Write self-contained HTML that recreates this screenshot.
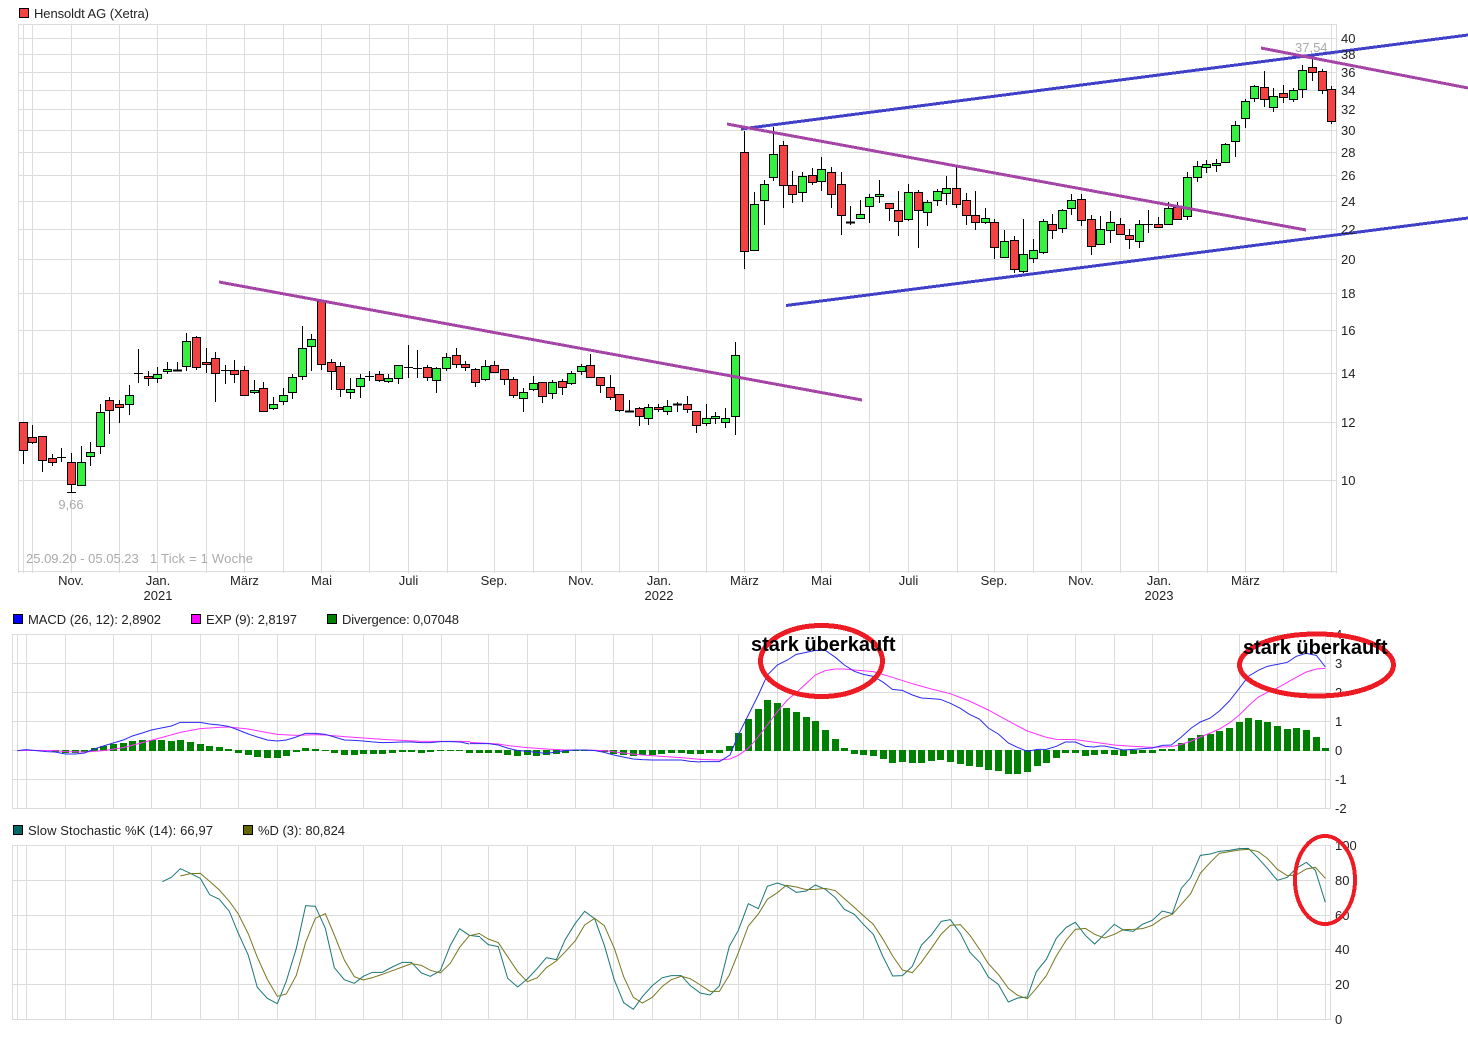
<!DOCTYPE html>
<html><head><meta charset="utf-8"><title>Hensoldt AG (Xetra)</title>
<style>
html,body{margin:0;padding:0;background:#fff;width:1468px;height:1044px;overflow:hidden}
svg{display:block;font-family:"Liberation Sans",sans-serif;font-size:13px}
.t{fill:#222}
.g{fill:#aaa}
.c{shape-rendering:crispEdges}
polyline{fill:none}
</style></head><body>
<svg width="1468" height="1044" viewBox="0 0 1468 1044" xmlns="http://www.w3.org/2000/svg">
<!-- main grid -->
<path class="c" fill="none" stroke="#dcdcdc" d="M18.5 24V573M23.5 24V573M32.5 24V573M71.5 24V573M119.5 24V573M157.5 24V573M206.5 24V573M244.5 24V573M283.5 24V573M321.5 24V573M369.5 24V573M408.5 24V573M447.5 24V573M494.5 24V573M533.5 24V573M581.5 24V573M619.5 24V573M658.5 24V573M706.5 24V573M744.5 24V573M783.5 24V573M821.5 24V573M869.5 24V573M908.5 24V573M957.5 24V573M994.5 24V573M1033.5 24V573M1081.5 24V573M1120.5 24V573M1158.5 24V573M1207.5 24V573M1245.5 24V573M1283.5 24V573M1331.5 24V573M1336.5 24V573M18 24.5H1337M18 38.5H1337M18 54.5H1337M18 72.5H1337M18 90.5H1337M18 109.5H1337M18 130.5H1337M18 152.5H1337M18 175.5H1337M18 201.5H1337M18 229.5H1337M18 259.5H1337M18 293.5H1337M18 330.5H1337M18 373.5H1337M18 422.5H1337M18 480.5H1337M18 571.5H1337"/>
<!-- macd grid -->
<path class="c" fill="none" stroke="#dcdcdc" d="M12.5 634V809M17.5 634V809M26.5 634V809M65.5 634V809M113.5 634V809M151.5 634V809M200.5 634V809M238.5 634V809M277.5 634V809M315.5 634V809M363.5 634V809M402.5 634V809M441.5 634V809M488.5 634V809M527.5 634V809M575.5 634V809M613.5 634V809M652.5 634V809M700.5 634V809M738.5 634V809M777.5 634V809M815.5 634V809M863.5 634V809M902.5 634V809M951.5 634V809M988.5 634V809M1027.5 634V809M1075.5 634V809M1114.5 634V809M1152.5 634V809M1201.5 634V809M1239.5 634V809M1277.5 634V809M1325.5 634V809M1330.5 634V809M12 634.5H1331M12 663.5H1331M12 692.5H1331M12 721.5H1331M12 750.5H1331M12 779.5H1331M12 808.5H1331"/>
<!-- stoch grid -->
<path class="c" fill="none" stroke="#dcdcdc" d="M12.5 845V1020M17.5 845V1020M26.5 845V1020M65.5 845V1020M113.5 845V1020M151.5 845V1020M200.5 845V1020M238.5 845V1020M277.5 845V1020M315.5 845V1020M363.5 845V1020M402.5 845V1020M441.5 845V1020M488.5 845V1020M527.5 845V1020M575.5 845V1020M613.5 845V1020M652.5 845V1020M700.5 845V1020M738.5 845V1020M777.5 845V1020M815.5 845V1020M863.5 845V1020M902.5 845V1020M951.5 845V1020M988.5 845V1020M1027.5 845V1020M1075.5 845V1020M1114.5 845V1020M1152.5 845V1020M1201.5 845V1020M1239.5 845V1020M1277.5 845V1020M1325.5 845V1020M1330.5 845V1020M12 845.5H1331M12 880.5H1331M12 915.5H1331M12 949.5H1331M12 984.5H1331M12 1019.5H1331"/>
<!-- wicks -->
<path class="c" fill="none" stroke="#000" d="M23.5 422V464M32.5 425V444M42.5 436V472M52.5 454V466M61.5 448V462M71.5 453V492M81.5 446V485M90.5 442V466M100.5 404V454M109.5 397V434M119.5 400V423M129.5 385V415M138.5 349V383M148.5 371V386M157.5 367V383M167.5 362V374M177.5 362V371M186.5 333V371M196.5 336V370M206.5 348V373M215.5 352V402M225.5 365V384M234.5 360V383M244.5 366V395M254.5 380V394M263.5 382V411M273.5 397V410M283.5 388V405M292.5 374V399M302.5 326V380M311.5 334V371M321.5 300V370M331.5 359V390M340.5 362V397M350.5 378V399M360.5 374V398M369.5 371V381M379.5 371V382M388.5 374V383M398.5 365V384M408.5 345V378M417.5 350V378M427.5 365V381M436.5 367V393M446.5 353V371M456.5 348V368M465.5 361V371M475.5 368V387M485.5 360V381M494.5 361V372M504.5 369V385M513.5 377V398M523.5 388V412M533.5 376V391M542.5 382V403M552.5 380V399M562.5 379V395M571.5 371V385M581.5 364V375M590.5 354V378M600.5 377V393M610.5 375V400M619.5 394V412M629.5 400V412M639.5 407V426M648.5 404V425M658.5 404V412M667.5 400V415M677.5 402V412M687.5 396V413M696.5 411V433M706.5 404V426M715.5 412V424M725.5 408V428M735.5 342V435M744.5 131V269M754.5 192V250M764.5 180V225M773.5 127V181M783.5 141V208M792.5 171V203M802.5 172V202M812.5 168V185M821.5 157V191M831.5 167V208M841.5 172V235M850.5 206V225M860.5 200V218M869.5 194V223M879.5 180V203M889.5 203V221M898.5 191V236M908.5 184V221M918.5 190V248M927.5 200V226M937.5 189V206M946.5 176V205M956.5 166V208M966.5 193V225M975.5 191V230M985.5 208V224M994.5 219V259M1004.5 230V257M1014.5 236V273M1023.5 219V273M1033.5 239V263M1043.5 219V254M1052.5 214V239M1062.5 209V233M1071.5 194V215M1081.5 194V226M1091.5 215V255M1100.5 216V244M1110.5 211V243M1120.5 218V234M1129.5 229V249M1139.5 220V248M1148.5 210V233M1158.5 217V228M1168.5 202V225M1177.5 202V220M1187.5 172V220M1197.5 161V182M1206.5 160V173M1216.5 159V172M1225.5 143V162M1235.5 121V157M1245.5 99V128M1254.5 85V102M1264.5 71V107M1273.5 88V112M1283.5 85V103M1293.5 88V102M1302.5 65V98M1312.5 59V81M1322.5 69V94M1331.5 86V124M57 457.5H66M67 492.5H76M134 373.5H143M173 370H182M173 371H182M221 370.5H230M365 376.5H374M404 367.5H413M413 368.5H422M625 411H634M625 412H634M673 404H682M673 405H682M846 222H855M846 223H855M1144 224.5H1153"/>
<!-- red bodies -->
<path class="c" fill="#f44242" stroke="#000" d="M19.5 422.5h8v28h-8zM28.5 437.5h8v5h-8zM38.5 436.5h8v24h-8zM48.5 458.5h8v4h-8zM67.5 462.5h8v22h-8zM105.5 400.5h8v10h-8zM115.5 404.5h8v3h-8zM144.5 376.5h8v2h-8zM192.5 337.5h8v30h-8zM202.5 362.5h8v2h-8zM211.5 358.5h8v15h-8zM230.5 370.5h8v4h-8zM240.5 370.5h8v25h-8zM259.5 388.5h8v23h-8zM317.5 301.5h8v63h-8zM327.5 362.5h8v9h-8zM336.5 366.5h8v23h-8zM375.5 374.5h8v6h-8zM423.5 367.5h8v10h-8zM452.5 355.5h8v9h-8zM461.5 364.5h8v3h-8zM471.5 369.5h8v13h-8zM490.5 365.5h8v7h-8zM500.5 369.5h8v10h-8zM509.5 379.5h8v16h-8zM538.5 382.5h8v14h-8zM558.5 381.5h8v6h-8zM586.5 365.5h8v12h-8zM596.5 377.5h8v8h-8zM606.5 387.5h8v10h-8zM615.5 394.5h8v16h-8zM635.5 408.5h8v8h-8zM654.5 407.5h8v2h-8zM683.5 404.5h8v5h-8zM692.5 411.5h8v14h-8zM740.5 152.5h8v99h-8zM779.5 145.5h8v40h-8zM788.5 185.5h8v9h-8zM808.5 175.5h8v7h-8zM827.5 172.5h8v22h-8zM837.5 184.5h8v31h-8zM885.5 203.5h8v5h-8zM894.5 210.5h8v11h-8zM914.5 192.5h8v18h-8zM952.5 188.5h8v16h-8zM962.5 200.5h8v15h-8zM971.5 215.5h8v7h-8zM990.5 222.5h8v25h-8zM1010.5 240.5h8v29h-8zM1048.5 224.5h8v6h-8zM1077.5 199.5h8v21h-8zM1087.5 219.5h8v27h-8zM1116.5 224.5h8v10h-8zM1125.5 235.5h8v4h-8zM1154.5 224.5h8v3h-8zM1173.5 207.5h8v12h-8zM1260.5 87.5h8v12h-8zM1279.5 93.5h8v4h-8zM1308.5 67.5h8v5h-8zM1318.5 71.5h8v19h-8zM1327.5 89.5h8v32h-8z"/>
<!-- green bodies -->
<path class="c" fill="#35f040" stroke="#000" d="M77.5 462.5h8v23h-8zM86.5 452.5h8v4h-8zM96.5 412.5h8v34h-8zM125.5 395.5h8v9h-8zM153.5 374.5h8v4h-8zM163.5 369.5h8v2h-8zM182.5 341.5h8v25h-8zM250.5 390.5h8v2h-8zM269.5 404.5h8v4h-8zM279.5 395.5h8v6h-8zM288.5 377.5h8v15h-8zM298.5 348.5h8v28h-8zM307.5 339.5h8v7h-8zM346.5 389.5h8v3h-8zM356.5 378.5h8v8h-8zM384.5 378.5h8v3h-8zM394.5 365.5h8v13h-8zM432.5 368.5h8v12h-8zM442.5 357.5h8v11h-8zM481.5 366.5h8v13h-8zM519.5 392.5h8v6h-8zM529.5 383.5h8v6h-8zM548.5 382.5h8v11h-8zM567.5 373.5h8v10h-8zM577.5 366.5h8v5h-8zM644.5 407.5h8v11h-8zM663.5 406.5h8v5h-8zM702.5 418.5h8v5h-8zM711.5 416.5h8v2h-8zM721.5 418.5h8v4h-8zM731.5 355.5h8v61h-8zM750.5 204.5h8v46h-8zM760.5 184.5h8v16h-8zM769.5 154.5h8v23h-8zM798.5 176.5h8v16h-8zM817.5 169.5h8v12h-8zM856.5 214.5h8v4h-8zM865.5 197.5h8v9h-8zM875.5 194.5h8v2h-8zM904.5 192.5h8v27h-8zM923.5 202.5h8v10h-8zM933.5 191.5h8v9h-8zM942.5 188.5h8v5h-8zM981.5 218.5h8v4h-8zM1000.5 241.5h8v16h-8zM1019.5 254.5h8v17h-8zM1029.5 250.5h8v8h-8zM1039.5 221.5h8v31h-8zM1058.5 210.5h8v18h-8zM1067.5 200.5h8v8h-8zM1096.5 229.5h8v15h-8zM1106.5 222.5h8v8h-8zM1135.5 224.5h8v17h-8zM1164.5 208.5h8v16h-8zM1183.5 177.5h8v39h-8zM1193.5 166.5h8v11h-8zM1202.5 164.5h8v3h-8zM1212.5 163.5h8v2h-8zM1221.5 144.5h8v18h-8zM1231.5 125.5h8v16h-8zM1241.5 101.5h8v17h-8zM1250.5 86.5h8v12h-8zM1269.5 96.5h8v11h-8zM1289.5 90.5h8v9h-8zM1298.5 70.5h8v19h-8z"/>
<!-- trend lines -->
<g class="c" fill="none" stroke-width="3">
<path stroke="#4040c8" d="M741 129L1468 35M786 305.5L1468 218"/>
<path stroke="#a545a8" d="M219 282L862 400M727 124L1306 230M1261 48L1468 88"/>
</g>
<!-- main text -->
<text x="71" y="509" text-anchor="middle" class="g">9,66</text>
<text x="1295" y="52" class="g">37,54</text>
<text x="26" y="563" class="g">25.09.20 - 05.05.23</text>
<text x="150" y="563" class="g" textLength="103">1 Tick = 1 Woche</text>
<g class="t">
<text x="1341" y="43">40</text><text x="1341" y="59">38</text><text x="1341" y="77">36</text><text x="1341" y="95">34</text><text x="1341" y="114">32</text><text x="1341" y="135">30</text><text x="1341" y="157">28</text><text x="1341" y="180">26</text><text x="1341" y="206">24</text><text x="1341" y="234">22</text><text x="1341" y="264">20</text><text x="1341" y="298">18</text><text x="1341" y="335">16</text><text x="1341" y="378">14</text><text x="1341" y="427">12</text><text x="1341" y="485">10</text>
<g text-anchor="middle">
<text x="71" y="585">Nov.</text><text x="158" y="585">Jan.</text><text x="158" y="600">2021</text><text x="244.5" y="585">März</text><text x="321.5" y="585">Mai</text><text x="408.5" y="585">Juli</text><text x="494" y="585">Sep.</text><text x="581" y="585">Nov.</text><text x="659" y="585">Jan.</text><text x="659" y="600">2022</text><text x="744.5" y="585">März</text><text x="821.5" y="585">Mai</text><text x="908.5" y="585">Juli</text><text x="994" y="585">Sep.</text><text x="1081" y="585">Nov.</text><text x="1159" y="585">Jan.</text><text x="1159" y="600">2023</text><text x="1245.5" y="585">März</text>
</g>
<text x="34" y="18" textLength="115">Hensoldt AG (Xetra)</text>
<text x="28" y="624" textLength="133">MACD (26, 12): 2,8902</text>
<text x="206" y="624" textLength="91">EXP (9): 2,8197</text>
<text x="342" y="624" textLength="117">Divergence: 0,07048</text>
<text x="28" y="835" textLength="185">Slow Stochastic %K (14): 66,97</text>
<text x="258" y="835" textLength="87">%D (3): 80,824</text>
<text x="1335" y="639">4</text><text x="1335" y="668">3</text><text x="1335" y="697">2</text><text x="1335" y="726">1</text><text x="1335" y="755">0</text><text x="1335" y="784">-1</text><text x="1335" y="813">-2</text>
<text x="1335" y="850">100</text><text x="1335" y="885">80</text><text x="1335" y="920">60</text><text x="1335" y="954">40</text><text x="1335" y="989">20</text><text x="1335" y="1024">0</text>
</g>
<!-- legend squares -->
<g class="c" stroke="#000">
<rect x="19.5" y="8.5" width="9" height="9" fill="#f44242"/>
<rect x="13.5" y="614.5" width="9" height="9" fill="#0000ff"/>
<rect x="191.5" y="614.5" width="9" height="9" fill="#ff00ff"/>
<rect x="327.5" y="614.5" width="9" height="9" fill="#008000"/>
<rect x="13.5" y="825.5" width="9" height="9" fill="#006666"/>
<rect x="243.5" y="825.5" width="9" height="9" fill="#666600"/>
</g>
<!-- macd bars -->
<path class="c" fill="none" stroke="#008000" stroke-width="7" d="M55.5 750V752M65.5 750V753M75.5 750V753M84.5 750V752M94.5 751V748M103.5 751V746M113.5 751V744M123.5 751V743M132.5 751V741M142.5 751V740M152.5 751V740M161.5 751V740M171.5 751V741M180.5 751V740M190.5 751V742M200.5 751V744M209.5 751V746M219.5 751V747M228.5 751V749M238.5 750V753M248.5 750V755M257.5 750V757M267.5 750V758M277.5 750V758M286.5 750V756M296.5 750V752M305.5 751V748M315.5 751V749M325.5 751V750M334.5 750V753M344.5 750V755M354.5 750V755M363.5 750V754M373.5 750V754M382.5 750V754M392.5 750V753M402.5 750V752M411.5 750V752M421.5 750V753M430.5 750V752M440.5 750V751M450.5 750V751M459.5 750V751M469.5 750V753M479.5 750V753M488.5 750V753M498.5 750V753M507.5 750V755M517.5 750V756M527.5 750V755M536.5 750V756M546.5 750V755M556.5 750V754M565.5 750V753M575.5 750V751M584.5 750V751M594.5 750V751M604.5 750V752M613.5 750V754M623.5 750V755M633.5 750V756M642.5 750V755M652.5 750V755M661.5 750V754M671.5 750V753M681.5 750V753M690.5 750V754M700.5 750V754M709.5 750V753M719.5 750V753M729.5 751V746M738.5 751V733M748.5 751V719M758.5 751V709M767.5 751V700M777.5 751V703M786.5 751V708M796.5 751V712M806.5 751V717M815.5 751V721M825.5 751V730M835.5 751V739M844.5 751V748M854.5 750V754M863.5 750V755M873.5 750V756M883.5 750V759M892.5 750V763M902.5 750V762M912.5 750V763M921.5 750V763M931.5 750V761M940.5 750V760M950.5 750V762M960.5 750V764M969.5 750V766M979.5 750V767M988.5 750V770M998.5 750V771M1008.5 750V774M1017.5 750V774M1027.5 750V772M1037.5 750V766M1046.5 750V763M1056.5 750V758M1065.5 750V753M1075.5 750V753M1085.5 750V756M1094.5 750V755M1104.5 750V754M1114.5 750V755M1123.5 750V756M1133.5 750V754M1142.5 750V753M1152.5 750V753M1162.5 751V749M1171.5 751V749M1181.5 751V743M1191.5 751V738M1200.5 751V735M1210.5 751V734M1219.5 751V731M1229.5 751V728M1239.5 751V722M1248.5 751V718M1258.5 751V720M1267.5 751V722M1277.5 751V726M1287.5 751V729M1296.5 751V728M1306.5 751V730M1316.5 751V737M1325.5 751V748"/>
<!-- macd lines -->
<g stroke-width="3">
<g transform="translate(0,605) scale(.33333)">
<polyline stroke="#ff30ff" points="52,437 108,436 165,437 196,440 254,441 310,437 370,428 427,413 484,398 541,382 601,371 658,367 685,366 745,372 802,383 832,388 889,391 946,389 976,390 1033,395 1090,399 1147,403 1207,406 1264,409 1321,409 1381,409 1410,410"/>
<polyline stroke="#2a2af0" points="52,437 79,434 108,437 140,440 165,441 196,447 226,447 254,444 283,432 310,423 340,414 370,405 397,393 427,384 454,375 484,369 514,363 541,352 571,352 601,352 628,357 658,360 685,364 715,375 745,387 772,396 802,405 832,408 859,405 889,396 916,385 946,385 976,388 1003,396 1033,405 1063,406 1090,408 1120,411 1147,413 1177,412 1207,411 1234,411 1264,413 1291,413 1321,410 1351,410 1381,411 1408,417"/>
</g>
<g transform="translate(470,725) scale(.33333)">
<polyline stroke="#ff30ff" points="0,52 55,55 85,57 115,62 172,68 229,72 287,75 345,75 403,77 460,84 517,90 574,94 634,98 691,103"/>
<polyline stroke="#2a2af0" points="0,56 55,56 85,60 115,70 142,76 172,79 199,82 229,85 259,81 290,76 316,75 345,75 375,77 403,82 431,90 460,96 490,102 517,104 547,105 604,105 634,105 661,109 691,111"/>
</g>
<g transform="translate(700,620) scale(.33333)">
<polyline stroke="#ff30ff" points="0,418 58,420 90,417 115,406 145,385 175,350 202,315 232,275 262,240 289,218 319,190 346,165 376,152 406,147 433,147 463,150 520,155 577,172 637,191 694,207 751,221 808,243 865,270 925,303 982,333 1039,352 1069,358 1126,359 1200,369"/>
<polyline stroke="#2a2af0" points="0,425 58,425 90,405 115,345 145,285 175,225 202,165 232,135 262,120 289,103 319,97 346,91 376,91 406,112 433,135 463,154 490,163 520,169 550,187 577,208 607,211 637,225 664,234 694,236 721,238 751,250 781,265 808,283 838,297 865,324 895,342 925,369 952,382 982,394 1012,388 1039,388 1069,379 1096,366 1126,366 1156,379 1183,381 1200,378"/>
</g>
<g transform="translate(1100,620) scale(.33333)">
<polyline stroke="#ff30ff" points="0,369 43,375 100,379 157,382 214,380 244,373 274,363 301,351 331,339 358,327 388,309 418,285 445,258 475,231 502,217 532,204 562,187 589,172 619,156 649,147 676,145"/>
<polyline stroke="#2a2af0" points="0,378 13,378 43,384 70,390 100,388 157,384 187,376 214,375 244,351 274,324 301,306 331,294 358,273 388,243 418,205 445,169 475,151 502,139 532,133 562,127 589,109 619,100 649,106 676,141"/>
</g>
<!-- stochastic -->
<g transform="translate(0,820) scale(.33333)">
<polyline stroke="#1a7676" points="487,185 514,172 541,146 571,160 601,175 629,224 658,238 688,274 715,340 745,406 772,502 802,535 832,551 859,483 889,385 917,257 946,259 976,325 1003,443 1033,479 1063,490 1090,469 1117,457 1147,457 1177,441 1207,427 1234,427 1264,459 1291,469 1321,452 1351,376 1379,326 1408,346 1440,350"/>
<polyline stroke="#77771f" points="541,168 571,161 601,160 629,184 658,210 688,244 715,282 745,342 772,412 802,478 832,529 859,522 889,466 917,367 946,295 976,281 1003,345 1033,420 1063,470 1090,480 1117,473 1147,463 1177,452 1207,441 1234,431 1264,436 1291,451 1321,459 1351,430 1379,382 1408,347 1440,340"/>
</g>
<g transform="translate(480,820) scale(.33333)">
<polyline stroke="#1a7676" points="0,352 25,374 55,380 83,475 113,501 142,477 172,445 199,413 229,419 256,358 286,310 314,274 344,296 373,376 403,480 431,548 460,568 487,530 517,497 547,473 574,467 604,467 631,497 661,519 690,525 718,498 748,379 775,331 805,251 835,266 862,199 892,189 919,198 949,217 979,213 1006,195 1036,208 1066,233 1093,268 1123,283 1150,313 1180,343 1208,408 1238,468 1267,467 1297,439 1324,376 1354,345 1384,304 1411,299 1441,340 1470,397 1500,428"/>
<polyline stroke="#77771f" points="0,342 25,357 55,368 83,410 113,455 142,485 172,473 199,443 229,423 256,395 286,362 314,315 344,295 373,317 403,385 431,470 460,532 487,549 517,532 547,499 574,479 604,469 631,476 661,495 690,514 718,514 748,465 775,398 805,318 835,282 862,238 892,218 919,196 949,201 979,209 1006,208 1036,205 1066,212 1093,236 1123,262 1150,287 1180,313 1208,356 1238,408 1267,450 1297,458 1324,427 1354,385 1384,342 1411,316 1441,314 1470,346 1500,390"/>
</g>
<g transform="translate(980,820) scale(.33333)">
<polyline stroke="#1a7676" points="0,428 25,471 55,493 85,546 113,534 142,531 169,455 199,418 229,355 259,322 286,307 316,346 344,372 373,343 403,313 430,330 460,334 487,313 517,301 547,273 577,281 604,205 632,173 661,106 691,102 718,94 748,91 778,86 805,85 835,115 862,145 892,181 922,172 949,145 979,127 1006,151 1036,247"/>
<polyline stroke="#77771f" points="0,390 25,431 55,463 85,505 113,526 142,536 169,505 199,467 229,408 259,360 286,328 316,325 344,343 373,354 403,343 430,329 460,328 487,326 517,316 547,295 577,283 604,253 632,221 661,160 691,127 718,100 748,95 778,90 805,88 835,95 862,115 892,148 922,167 949,165 979,147 1006,142 1036,175"/>
</g>
</g>
<!-- annotations -->
<g class="c" fill="none" stroke="#ed1c24">
<ellipse cx="821.5" cy="661" rx="61" ry="35.5" stroke-width="5"/>
<ellipse cx="1316.5" cy="665" rx="77" ry="31" stroke-width="5"/>
<ellipse cx="1325" cy="880" rx="30" ry="44" stroke-width="4"/>
</g>
<text x="751" y="651" font-size="20" font-weight="bold" fill="#000">stark überkauft</text>
<text x="1243" y="654" font-size="20" font-weight="bold" fill="#000">stark überkauft</text>
</svg>
</body></html>
